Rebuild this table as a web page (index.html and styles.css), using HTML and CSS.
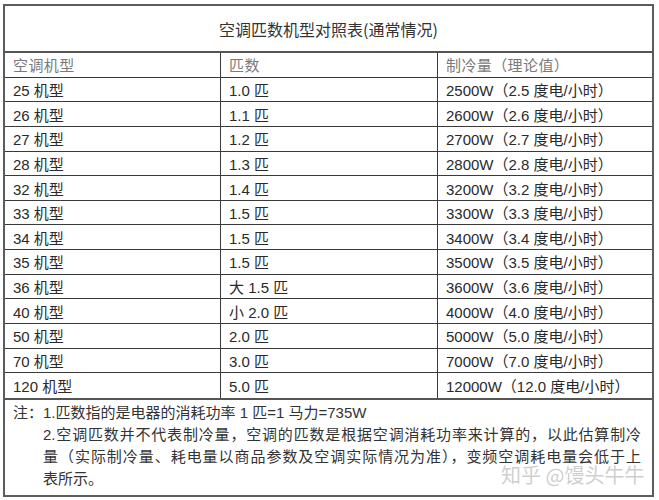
FILE: index.html
```html
<!DOCTYPE html>
<html lang="zh-CN">
<head>
<meta charset="utf-8">
<title>空调匹数机型对照表</title>
<link rel="stylesheet" href="styles.css">
</head>
<body>
<div class="sheet">
  <div class="title">空调匹数机型对照表(通常情况)</div>
  <div class="grid">
    <div class="cell head">空调机型</div><div class="cell head">匹数</div><div class="cell head">制冷量（理论值）</div>
    <div class="cell">25 机型</div><div class="cell">1.0 匹</div><div class="cell">2500W（2.5 度电/小时）</div>
    <div class="cell">26 机型</div><div class="cell">1.1 匹</div><div class="cell">2600W（2.6 度电/小时）</div>
    <div class="cell">27 机型</div><div class="cell">1.2 匹</div><div class="cell">2700W（2.7 度电/小时）</div>
    <div class="cell">28 机型</div><div class="cell">1.3 匹</div><div class="cell">2800W（2.8 度电/小时）</div>
    <div class="cell">32 机型</div><div class="cell">1.4 匹</div><div class="cell">3200W（3.2 度电/小时）</div>
    <div class="cell">33 机型</div><div class="cell">1.5 匹</div><div class="cell">3300W（3.3 度电/小时）</div>
    <div class="cell">34 机型</div><div class="cell">1.5 匹</div><div class="cell">3400W（3.4 度电/小时）</div>
    <div class="cell">35 机型</div><div class="cell">1.5 匹</div><div class="cell">3500W（3.5 度电/小时）</div>
    <div class="cell">36 机型</div><div class="cell">大 1.5 匹</div><div class="cell">3600W（3.6 度电/小时）</div>
    <div class="cell">40 机型</div><div class="cell">小 2.0 匹</div><div class="cell">4000W（4.0 度电/小时）</div>
    <div class="cell">50 机型</div><div class="cell">2.0 匹</div><div class="cell">5000W（5.0 度电/小时）</div>
    <div class="cell">70 机型</div><div class="cell">3.0 匹</div><div class="cell">7000W（7.0 度电/小时）</div>
    <div class="cell last">120 机型</div><div class="cell last">5.0 匹</div><div class="cell last">12000W（12.0 度电/小时）</div>
  </div>
  <div class="notes">
    <div class="label">注：</div>
    <div class="body">
      <div class="line">1.匹数指的是电器的消耗功率 1 匹=1 马力=735W</div>
      <div class="line just">2.空调匹数并不代表制冷量，空调的匹数是根据空调消耗功率来计算的，以此估算制冷</div>
      <div class="line just">量（实际制冷量、耗电量以商品参数及空调实际情况为准），变频空调耗电量会低于上</div>
      <div class="line">表所示。</div>
    </div>
    <div class="watermark">知乎 @馒头牛牛</div>
  </div>
</div>
</body>
</html>
```
FILE: styles.css
```css
html, body {
  margin: 0;
  padding: 0;
  background: #ffffff;
}

body {
  font-family: "Liberation Sans", "Noto Sans CJK SC", sans-serif;
  font-size: 15px;
  color: #2a2a2a;
}

.sheet {
  margin: 4px 0 0 3px;
  width: 651px;
  height: 493px;
  box-sizing: border-box;
  border: 2px solid #5c5c5c;
  display: flex;
  flex-direction: column;
}

.title {
  height: 45px;
  flex: none;
  display: flex;
  align-items: center;
  justify-content: center;
  font-family: "Noto Sans CJK SC", sans-serif;
  font-size: 16px;
  color: #333333;
  border-bottom: 2px solid #555555;
}

.grid {
  flex: none;
  display: grid;
  grid-template-columns: 216px 217px 1fr;
  grid-auto-rows: 24.65px;
}

.cell {
  box-sizing: border-box;
  display: flex;
  align-items: center;
  padding-left: 8px;
  border-bottom: 1px solid #3a3a3a;
  border-right: 1px solid #3a3a3a;
  white-space: nowrap;
}

.cell:nth-child(3n) {
  border-right: none;
}

.cell.last {
  border-bottom: none;
}

.cell.head {
  color: #7a7a7a;
  letter-spacing: 0.4px;
}

.notes {
  position: relative;
  flex: 1;
  display: flex;
  padding: 2px 0 0 8px;
  border-top: 2px solid #555555;
  line-height: 22px;
  color: #333333;
}

.label {
  width: 30px;
  flex: none;
}

.body {
  width: 598px;
  flex: none;
}

.line {
  white-space: nowrap;
}

.line.just {
  text-align: justify;
  text-align-last: justify;
}

.watermark {
  position: absolute;
  left: 496px;
  top: 63px;
  white-space: nowrap;
  font-family: "Noto Sans CJK SC", sans-serif;
  font-size: 20px;
  line-height: 24px;
  color: rgba(185, 185, 185, 0.7);
}
```
